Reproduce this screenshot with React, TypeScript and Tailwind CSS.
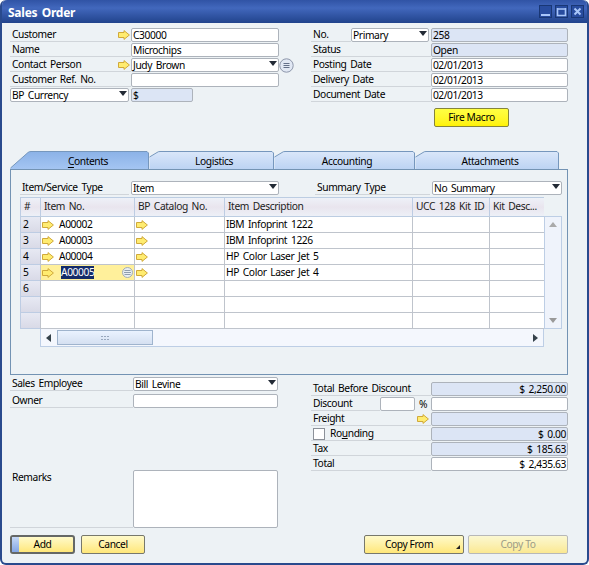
import type { ReactNode } from "react";

const TABS = [
  { label: "Contents", hotkey: true, width: 139, textX: 78 },
  { label: "Logistics", hotkey: false, width: 125, textX: 65 },
  { label: "Accounting", hotkey: false, width: 141, textX: 73 },
  { label: "Attachments", hotkey: false, width: 144, textX: 75 },
];

const ROWS = [
  { no: "2", item: "A00002", description: "IBM Infoprint 1222" },
  { no: "3", item: "A00003", description: "IBM Infoprint 1226" },
  { no: "4", item: "A00004", description: "HP Color Laser Jet 5" },
  { no: "5", item: "A00005", description: "HP Color Laser Jet 4" },
  { no: "6", item: "", description: "" },
  { no: "", item: "", description: "" },
  { no: "", item: "", description: "" },
];

const COLS = "grid grid-cols-[20px_94px_90px_188px_77px_55px]";

function LinkArrow() {
  return (
    <svg width="12" height="10" viewBox="0 0 12 10" className="shrink-0">
      <path d="M.5 2.5h5.5V.6L11.4 5 6 9.4V7.5H.5z" fill="#ffec70" stroke="#d0a93a" />
    </svg>
  );
}

function Caret({ className = "" }: { className?: string }) {
  return (
    <svg width="8" height="5" viewBox="0 0 8 5" className={`shrink-0 ${className}`}>
      <path d="M0 0h8L4 5z" fill="#222a35" />
    </svg>
  );
}

function ListIcon({ small = false }: { small?: boolean }) {
  if (small) {
    return (
      <svg width="11" height="11" viewBox="0 0 11 11" className="shrink-0">
        <circle cx="5.5" cy="5.5" r="5" fill="#e8eef2" stroke="#a2acb5" />
        <path d="M2.5 3.5h6M2 5.5h7M2.5 7.5h6" stroke="#8f9dae" />
      </svg>
    );
  }
  return (
    <svg width="15" height="15" viewBox="0 0 15 15" className="shrink-0">
      <circle cx="7.5" cy="7.5" r="6.7" fill="#e1e8f4" stroke="#8d96aa" />
      <path d="M4.5 5.5h6M4.5 7.5h6M4.5 9.5h6" stroke="#56627d" strokeWidth=".9" />
    </svg>
  );
}

function Field({ children, className = "", dim = false }: { children?: ReactNode; className?: string; dim?: boolean }) {
  return (
    <div
      className={`flex h-[14px] shrink-0 items-center rounded-[2px] border border-[#adb3bb] pl-px leading-none ${dim ? "bg-[#dce5f5]" : "bg-white"} ${className}`}
    >
      {children}
    </div>
  );
}

function Select({ value, className = "" }: { value: string; className?: string }) {
  return (
    <Field className={`justify-between pr-px ${className}`}>
      <span>{value}</span>
      <Caret className="-mt-[3px]" />
    </Field>
  );
}

function Label({ children, className = "" }: { children: ReactNode; className?: string }) {
  return (
    <div className={`flex h-[14px] items-center border-b border-[#d0d5da] pl-0.5 leading-none ${className}`}>{children}</div>
  );
}

function TitleBar() {
  return (
    <div className="flex h-[23px] items-center justify-between rounded-t-[5px] bg-linear-to-b from-[#3053a5] via-[#4268bd] via-35% to-[#21438c] pr-[3px] pl-[6px]">
      <h1 className="pt-[3px] text-[12px] font-bold tracking-[-0.25px] text-white">Sales Order</h1>
      <div className="flex gap-[3px]">
        {["min", "max", "close"].map((kind) => (
          <svg key={kind} width="13" height="13" viewBox="0 0 13 13">
            <rect x=".5" y=".5" width="12" height="12" fill="#284c9f" stroke="#193775" />
            {kind === "min" && <path d="M2 10h9" stroke="#a9c6fa" strokeWidth="2" />}
            {kind === "max" && <path d="M2.5 3v7.5h8V3M2 4h9" fill="none" stroke="#a9c6fa" strokeWidth="1.6" />}
            {kind === "close" && <path d="M3.5 3.5l6 6M9.5 3.5l-6 6" stroke="#a9c6fa" strokeWidth="2" />}
          </svg>
        ))}
      </div>
    </div>
  );
}

function Header() {
  return (
    <div className="flex h-[128px] justify-between pt-[5px] pr-[19px] pl-2">
      <div className="flex w-[285px] flex-col gap-px">
        <div className="flex">
          <Label className="w-[121px] justify-between pr-px">Customer<LinkArrow /></Label>
          <Field className="w-[148px]">C30000</Field>
        </div>
        <div className="flex">
          <Label className="w-[121px]">Name</Label>
          <Field className="w-[148px]">Microchips</Field>
        </div>
        <div className="flex h-[14px] items-center">
          <Label className="w-[121px] justify-between pr-px">Contact Person<LinkArrow /></Label>
          <Select value="Judy Brown" className="w-[148px]" />
          <ListIcon />
        </div>
        <div className="flex">
          <Label className="w-[121px]">Customer Ref. No.</Label>
          <Field className="w-[148px]" />
        </div>
        <div className="flex gap-[2px]">
          <Select value="BP Currency" className="w-[119px]" />
          <Field dim className="w-[62px]">$</Field>
        </div>
      </div>
      <div className="flex w-[257px] flex-col gap-px">
        <div className="flex">
          <Label className="w-[40px]">No.</Label>
          <Select value="Primary" className="mr-[2px] w-[78px]" />
          <Field dim className="w-[137px]">258</Field>
        </div>
        <div className="flex">
          <Label className="w-[120px]">Status</Label>
          <Field dim className="w-[137px]">Open</Field>
        </div>
        {["Posting Date", "Delivery Date", "Document Date"].map((label) => (
          <div key={label} className="flex">
            <Label className="w-[120px]">{label}</Label>
            <Field className="w-[137px]"><span className="tracking-[-0.5px]">02/01/2013</span></Field>
          </div>
        ))}
        <button className="mt-[5px] ml-[123px] h-[19px] w-[75px] rounded-[2px] border border-[#85843c] bg-linear-to-b from-[#ffff42] to-[#fff200] leading-none">
          Fire Macro
        </button>
      </div>
    </div>
  );
}

function Tabs() {
  return (
    <div className="flex h-[18px] pl-2">
      {TABS.map((tab, i) => {
        const w = tab.width;
        const slant = i === 0 ? 18 : 8;
        const start = i === 0 ? 17 : 6;
        const shape = `M.5 ${start}L${slant} 1.5Q${slant + 1} .5 ${slant + 3} .5H${w - 2}L${w - 0.5} 2V18`;
        return (
          <div key={tab.label} className="grid h-[18px] shrink-0" style={{ width: w }}>
            <svg width={w} height="18" className="col-start-1 row-start-1">
              <defs>
                <linearGradient id={`tab${i}`} x2="0" y2="1">
                  <stop stopColor={i === 0 ? "#8bb2e7" : "#dae7fa"} />
                  <stop offset="1" stopColor={i === 0 ? "#a4c5f2" : "#bcd3f3"} />
                </linearGradient>
              </defs>
              <path d={`${shape}H.5z`} fill={`url(#tab${i})`} />
              <path d={shape} fill="none" stroke="#7697bd" />
            </svg>
            <div className="col-start-1 row-start-1 flex items-center pt-[3px] leading-none" style={{ paddingLeft: tab.textX }}>
              <span className="w-0">
                <span className="inline-block -translate-x-1/2">
                  {tab.hotkey ? <u className="underline-offset-2">{tab.label[0]}</u> : tab.label[0]}
                  {tab.label.slice(1)}
                </span>
              </span>
            </div>
          </div>
        );
      })}
    </div>
  );
}

function Matrix() {
  return (
    <div className="ml-[9px] flex">
      <div className="w-[524px]">
        <div className={`${COLS} h-[20px] border-y border-[#bccde2] bg-linear-to-b from-[#eef1f8] via-[#e9e5ee] to-[#edf0f7] leading-none text-[#222]`}>
          {["#", "Item No.", "BP Catalog No.", "Item Description", "UCC 128 Kit ID", "Kit Desc..."].map((name) => (
            <div key={name} className="flex items-center border-l border-[#bdcce3] pb-px pl-[3px] whitespace-nowrap">{name}</div>
          ))}
        </div>
        {ROWS.map((row, i) => {
          const active = row.no === "5";
          const cell = "flex items-center border-b border-l border-[#bfc4cc] bg-white whitespace-nowrap";
          return (
            <div key={i} className={`${COLS} h-4 leading-none`}>
              <div className="flex items-center border-b border-l border-[#bdcce3] bg-linear-to-b from-[#e7e9f3] to-[#d9dae7] pl-[2px]">{row.no}</div>
              <div className={`${cell} pl-px ${active ? "bg-[#fff09b]!" : ""}`}>
                {row.item && <LinkArrow />}
                {active ? (
                  <>
                    <span className="ml-[7px] bg-[#142c69] py-px text-white">{row.item}</span>
                    <span className="mr-px ml-auto"><ListIcon small /></span>
                  </>
                ) : (
                  <span className="ml-[5px]">{row.item}</span>
                )}
              </div>
              <div className={`${cell} pl-px`}>{row.item && <LinkArrow />}</div>
              <div className={`${cell} pl-px`}>{row.description}</div>
              <div className={cell} />
              <div className={cell} />
            </div>
          );
        })}
        <div className="ml-5 flex h-[18px] items-center border border-t-0 border-[#bdcee5] bg-[#f4f7fd]">
          <svg width="16" height="16"><path d="M10 4v8L5 8z" fill="#35424b" /></svg>
          <div className="flex h-[15px] w-[96px] items-center justify-center border border-[#9fb4cd] bg-linear-to-b from-[#eaf3ff] to-[#d5e0f1]">
            <svg width="9" height="6"><path d="M0 1.5h9M0 4.5h9" stroke="#99a8bd" strokeDasharray="2 1" /></svg>
          </div>
          <svg width="16" height="16" className="ml-auto"><path d="M6 4v8l5-4z" fill="#35424b" /></svg>
        </div>
      </div>
      <div className="mt-[19px] flex h-[113px] w-[18px] flex-col items-center justify-between border border-[#bdcee5] bg-[#eff3fb] py-[5px]">
        <svg width="8" height="5"><path d="M0 5h8L4 0z" fill="#aaa" /></svg>
        <svg width="8" height="5"><path d="M0 0h8L4 5z" fill="#999" /></svg>
      </div>
    </div>
  );
}

function ContentsPanel() {
  return (
    <div className="ml-2 h-[206px] w-[558px] border border-[#7393b3] bg-[#edf2f5] pt-[11px]">
      <div className="flex h-[16px] pl-[9px]">
        <Label className="mr-[2px] w-[109px]">Item/Service Type</Label>
        <Select value="Item" className="w-[148px]" />
        <Label className="mr-[2px] ml-[36px] w-[115px]">Summary Type</Label>
        <Select value="No Summary" className="w-[130px]" />
      </div>
      <Matrix />
    </div>
  );
}

function Footer() {
  return (
    <div className="flex h-[160px] justify-between pt-[2px] pr-[19px] pl-2">
      <div className="w-[268px]">
        <div className="flex">
          <Label className="w-[123px]">Sales Employee</Label>
          <Select value="Bill Levine" className="w-[145px]" />
        </div>
        <div className="mt-[3px] flex">
          <Label className="w-[123px]">Owner</Label>
          <Field className="w-[145px]" />
        </div>
        <div className="mt-[62px] flex h-[58px]">
          <div className="w-[123px] border-b border-[#d0d5da] pt-[2px] pl-0.5 leading-none">Remarks</div>
          <div className="w-[145px] rounded-[2px] border border-[#adb3bb] bg-white" />
        </div>
      </div>
      <div className="mt-[5px] flex w-[257px] flex-col gap-px">
        <TotalRow label="Total Before Discount" value="$ 2,250.00" dim />
        <div className="flex">
          <Label className="w-[69px]">Discount</Label>
          <Field className="w-[35px]" />
          <div className="w-4 pt-0.5 pl-1 leading-none">%</div>
          <Field className="w-[137px]" />
        </div>
        <TotalRow label="Freight" value="" dim arrow />
        <TotalRow label="Rounding" value="$ 0.00" dim check />
        <TotalRow label="Tax" value="$ 185.63" dim />
        <TotalRow label="Total" value="$ 2,435.63" />
      </div>
    </div>
  );
}

function TotalRow({ label, value, dim, arrow, check }: { label: string; value: string; dim?: boolean; arrow?: boolean; check?: boolean }) {
  return (
    <div className="flex">
      <Label className="w-[120px]">
        {check ? (
          <>
            <span className="mr-[5px] h-3 w-3 border border-[#8c9199] bg-white" />
            Ro<u>u</u>nding
          </>
        ) : label}
        {arrow && <span className="mr-[2px] ml-auto"><LinkArrow /></span>}
      </Label>
      <Field dim={dim} className="w-[137px] justify-end pr-px">{value}</Field>
    </div>
  );
}

function Buttons() {
  const base = "h-[19px] rounded-[2px] border bg-linear-to-b from-[#fffac9] to-[#ffe778] pb-px leading-none";
  return (
    <div className="flex pl-2">
      <button className={`${base} relative w-[65px] rounded-[3px]! border-2! border-[#656866]`}>
        <span className="absolute inset-y-0 left-0 w-[7px] bg-linear-to-b from-[#c5d8f6] to-[#83a6e5]" />
        Add
      </button>
      <button className={`${base} ml-[6px] w-[64px] border-[#77786c]`}>Cancel</button>
      <button className={`${base} relative ml-[219px] w-[100px] border-[#77786c] pr-[10px]`}>
        Copy From
        <svg width="4" height="4" className="absolute right-[3px] bottom-[4px]"><path d="M4 0v4H0z" fill="#222" /></svg>
      </button>
      <button className={`${base} ml-1 w-[100px] border-[#aaa] text-[#88866b] opacity-80`}>Copy To</button>
    </div>
  );
}

export default function App() {
  return (
    <div className="h-[565px] w-[589px] bg-white font-['Noto_Sans','Open_Sans',sans-serif] text-[10.25px] tracking-[-0.4px] text-black [word-spacing:1.5px]">
      <div className="h-[565px] rounded-[6px] border-x-2 border-b-2 border-[#294a8d] bg-[#edf2f5]">
        <TitleBar />
        <Header />
        <Tabs />
        <ContentsPanel />
        <Footer />
        <Buttons />
      </div>
    </div>
  );
}
